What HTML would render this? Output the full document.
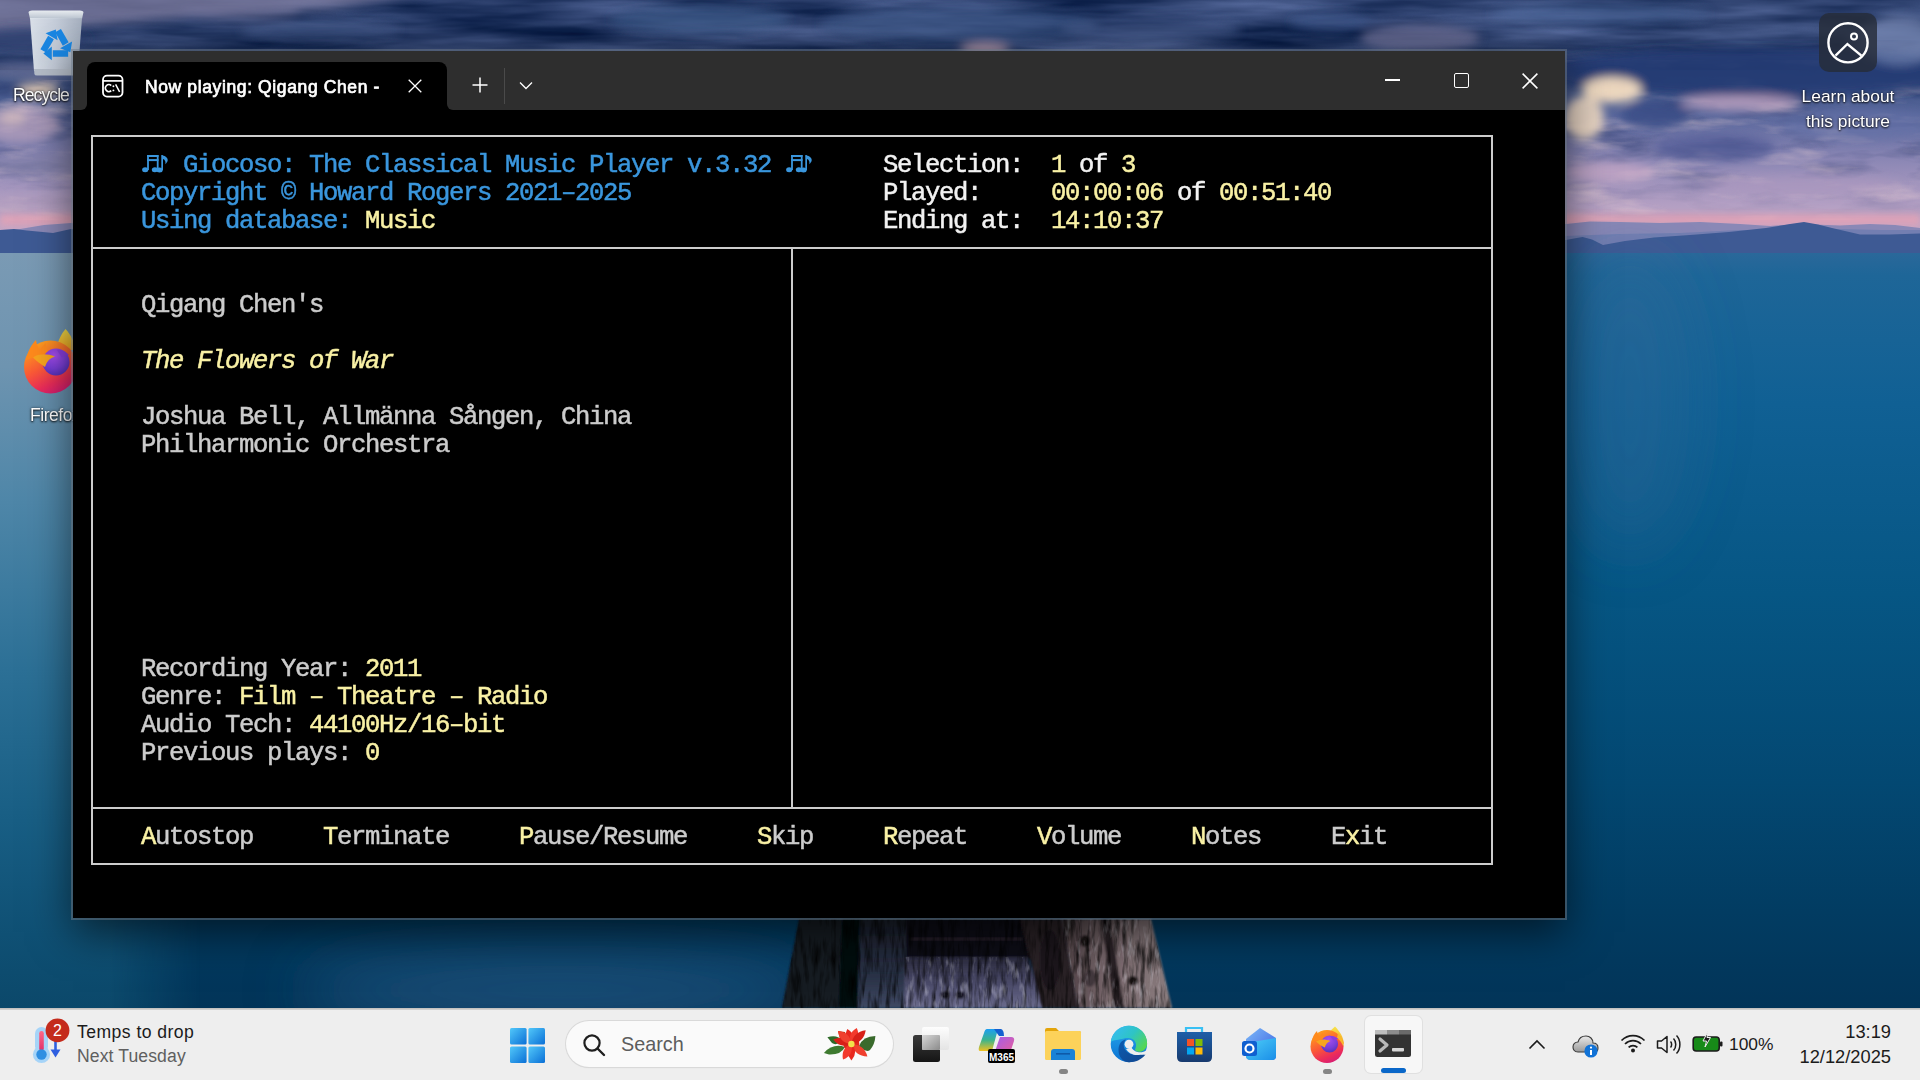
<!DOCTYPE html>
<html><head><meta charset="utf-8">
<style>
html,body{margin:0;padding:0;width:1920px;height:1080px;overflow:hidden;background:#1d4f7a;}
body{position:relative;font-family:"Liberation Sans",sans-serif;}
.a{position:absolute;}
#bg{position:absolute;left:0;top:0;width:1920px;height:1080px;}
#win{position:absolute;left:73px;top:51px;width:1492px;height:867px;background:#000;box-shadow:0 0 0 2px rgba(110,122,135,0.5),0 14px 40px rgba(0,0,0,0.6);}
.g{background:#2e2e2e;position:absolute;}
.row{position:absolute;left:85px;height:28px;line-height:28px;font-family:"Liberation Mono",monospace;font-size:25.6px;letter-spacing:-1.36px;margin-top:2px;white-space:pre;color:#cccccc;-webkit-text-stroke:0.5px currentColor;}
.b{color:#3a96dd}.y{color:#f9f1a5}.w{color:#f2f2f2}
.ln{position:absolute;background:#cccccc;}
#tb{position:absolute;left:0;top:1008px;width:1920px;height:72px;background:#eeeeee;border-top:1px solid #c4c2c0;box-sizing:border-box;}
</style></head><body>
<div id="bg"><svg class="a" style="left:0;top:0" width="1920" height="1080" viewBox="0 0 1920 1080">
<defs>
<linearGradient id="sky" x1="0" y1="0" x2="0" y2="1">
<stop offset="0" stop-color="#2a4472"/>
<stop offset="0.25" stop-color="#2b4676"/>
<stop offset="0.45" stop-color="#59679c"/>
<stop offset="0.62" stop-color="#8a86b4"/>
<stop offset="0.8" stop-color="#b4a0c4"/>
<stop offset="0.92" stop-color="#c6a8c6"/>
<stop offset="1" stop-color="#d2a8c0"/>
</linearGradient>
<linearGradient id="sea" x1="0" y1="0" x2="0" y2="1">
<stop offset="0" stop-color="#2a689a"/>
<stop offset="0.03" stop-color="#1e6698"/>
<stop offset="0.2" stop-color="#106094"/>
<stop offset="0.45" stop-color="#065684"/>
<stop offset="0.7" stop-color="#034872"/>
<stop offset="0.87" stop-color="#023c62"/>
<stop offset="1" stop-color="#023458"/>
</linearGradient>
<linearGradient id="fogL" x1="0" y1="0" x2="0" y2="1">
<stop offset="0" stop-color="#7a9ab4"/>
<stop offset="0.15" stop-color="#6e94b0"/>
<stop offset="0.33" stop-color="#4e86a8"/>
<stop offset="0.55" stop-color="#2c7096"/>
<stop offset="0.75" stop-color="#185e84"/>
<stop offset="0.9" stop-color="#0f5074"/>
<stop offset="1" stop-color="#0b486a"/>
</linearGradient>
<linearGradient id="fogFade" x1="0" y1="0" x2="1" y2="0">
<stop offset="0" stop-color="#fff" stop-opacity="1"/>
<stop offset="0.55" stop-color="#fff" stop-opacity="1"/>
<stop offset="1" stop-color="#fff" stop-opacity="0"/>
</linearGradient>
<linearGradient id="vfade" x1="0" y1="0" x2="0" y2="1"><stop offset="0" stop-color="#fff"/><stop offset="0.55" stop-color="#fff"/><stop offset="1" stop-color="#000"/></linearGradient>
<mask id="skyMaskR" maskUnits="userSpaceOnUse" x="0" y="0" width="1920" height="260"><rect x="0" y="40" width="1920" height="185" fill="url(#vfade)"/></mask>
<mask id="fogMask"><rect x="0" y="0" width="200" height="1080" fill="url(#fogFade)"/></mask>
<filter id="bl3" x="-50%" y="-50%" width="200%" height="200%"><feGaussianBlur stdDeviation="3"/></filter>
<filter id="bl5" x="-50%" y="-50%" width="200%" height="200%"><feGaussianBlur stdDeviation="5"/></filter>
<filter id="bl12" x="-50%" y="-50%" width="200%" height="200%"><feGaussianBlur stdDeviation="12"/></filter>
<filter id="bl30" x="-50%" y="-50%" width="200%" height="200%"><feGaussianBlur stdDeviation="30"/></filter>
<filter id="cloudTex" x="0" y="0" width="100%" height="100%" color-interpolation-filters="sRGB">
<feTurbulence type="fractalNoise" baseFrequency="0.005 0.045" numOctaves="4" seed="21"/>
<feColorMatrix type="matrix" values="0.55 0 0 0 -0.1  0.55 0 0 0 -0.03  0.62 0 0 0 0.11  0 0 0 0 1"/>
</filter>
<filter id="darkTex" x="0" y="0" width="100%" height="100%" color-interpolation-filters="sRGB">
<feTurbulence type="fractalNoise" baseFrequency="0.012 0.05" numOctaves="4" seed="8"/>
<feColorMatrix type="matrix" values="0 0 0 0 0.16  0 0 0 0 0.22  0 0 0 0 0.42  2.6 0 0 0 -1.25"/>
</filter>
<filter id="lightTex" x="0" y="0" width="100%" height="100%" color-interpolation-filters="sRGB">
<feTurbulence type="fractalNoise" baseFrequency="0.014 0.06" numOctaves="4" seed="3"/>
<feColorMatrix type="matrix" values="0 0 0 0 0.95  0 0 0 0 0.84  0 0 0 0 0.84  2.4 0 0 0 -1.25"/>
</filter>
</defs>
<rect x="0" y="0" width="1920" height="256" fill="url(#sky)"/>
<!-- top band clouds -->
<rect x="0" y="0" width="1920" height="70" filter="url(#cloudTex)" opacity="0.8"/>
<g filter="url(#bl5)">
<path d="M-20 -10 L440 -10 L330 8 L180 18 L60 28 L-20 34 Z" fill="#8480a2" opacity="0.7"/>
<ellipse cx="25" cy="36" rx="45" ry="12" fill="#6c6e98" opacity="0.55"/>
<ellipse cx="240" cy="12" rx="60" ry="8" fill="#7c7ca2" opacity="0.5"/>
<ellipse cx="320" cy="30" rx="80" ry="9" fill="#4a5e8e" opacity="0.6"/>
<ellipse cx="700" cy="20" rx="90" ry="14" fill="#3e5a8a" opacity="0.6"/>
<ellipse cx="960" cy="25" rx="140" ry="18" fill="#465f90" opacity="0.55"/>
<ellipse cx="985" cy="49" rx="25" ry="6" fill="#b89aa8" opacity="0.85"/>
<ellipse cx="1150" cy="30" rx="90" ry="14" fill="#4e6494" opacity="0.5"/>
<ellipse cx="1420" cy="38" rx="60" ry="14" fill="#76789e" opacity="0.7"/>
<ellipse cx="1330" cy="22" rx="40" ry="10" fill="#3a5688" opacity="0.6"/>
<ellipse cx="1600" cy="14" rx="110" ry="10" fill="#4e6ca0" opacity="0.5"/>
<ellipse cx="1890" cy="45" rx="45" ry="22" fill="#7080ae" opacity="0.55"/>
</g>
<!-- right strip clouds -->
<rect x="1566" y="40" width="354" height="185" filter="url(#darkTex)" opacity="0.55" mask="url(#skyMaskR)"/>
<rect x="1566" y="60" width="354" height="160" filter="url(#lightTex)" opacity="0.45"/>
<g filter="url(#bl5)">
<ellipse cx="1760" cy="72" rx="230" ry="24" fill="#223c74" opacity="0.9"/>
<ellipse cx="1900" cy="40" rx="40" ry="25" fill="#7a8ab6" opacity="0.6"/>
<ellipse cx="1612" cy="90" rx="30" ry="13" fill="#f6dec2" opacity="0.95"/>
<ellipse cx="1584" cy="118" rx="20" ry="22" fill="#f2dcc4" opacity="0.9"/>
<ellipse cx="1655" cy="115" rx="34" ry="14" fill="#3a4c86" opacity="0.85"/>
<ellipse cx="1740" cy="103" rx="60" ry="8" fill="#c8a8c4" opacity="0.75"/>
<ellipse cx="1715" cy="148" rx="60" ry="14" fill="#4e5a96" opacity="0.7"/>
<ellipse cx="1860" cy="125" rx="80" ry="16" fill="#6470a6" opacity="0.6"/>
<ellipse cx="1610" cy="172" rx="45" ry="10" fill="#caaac8" opacity="0.7"/>
<ellipse cx="1800" cy="185" rx="100" ry="10" fill="#b09ac0" opacity="0.5"/>
</g>
<!-- left strip clouds -->
<rect x="0" y="40" width="75" height="185" filter="url(#darkTex)" opacity="0.6" mask="url(#skyMaskR)"/>
<rect x="0" y="80" width="75" height="140" filter="url(#lightTex)" opacity="0.6"/>
<g filter="url(#bl5)">
<ellipse cx="30" cy="40" rx="60" ry="12" fill="#2c3e6e" opacity="0.8"/>
<ellipse cx="30" cy="72" rx="50" ry="8" fill="#7a7c9e" opacity="0.6"/>
<ellipse cx="38" cy="90" rx="22" ry="6" fill="#f2d6b8" opacity="0.9"/>
<ellipse cx="20" cy="125" rx="40" ry="18" fill="#b8a2be" opacity="0.75"/>
<ellipse cx="12" cy="118" rx="14" ry="6" fill="#e0c4c0" opacity="0.7"/>
<ellipse cx="40" cy="165" rx="50" ry="12" fill="#7e7ea4" opacity="0.55"/>
<ellipse cx="30" cy="205" rx="50" ry="10" fill="#b09cbc" opacity="0.6"/>
</g>
<!-- pink horizon haze -->
<rect x="0" y="214" width="1920" height="12" fill="#e6a2b4" opacity="0.75" filter="url(#bl3)"/>
<!-- mountains -->
<path d="M0 232 L20 229 L44 225 L71 223 L90 226 L140 230 L400 232 L1566 224 L1590 221.5 L1620 222 L1660 223 L1700 222 L1740 224 L1770 226 L1800 224 L1840 225.5 L1870 224 L1895 225 L1920 228 L1920 256 L0 256 Z" fill="#8a88b6"/>
<path d="M0 236 L200 238 L1566 236 L1620 234 L1680 233 L1740 230 L1790 231 L1840 229 L1880 230 L1920 230 L1920 256 L0 256 Z" fill="#6e7cb0" opacity="0.85"/>
<path d="M0 230 L14 229 L27 230.5 L53 233 L71 229 L90 231 L140 236 L400 238 L1566 240 L1574 238.5 L1582.5 237 L1592 239.5 L1603 245 L1625 241 L1654 237.5 L1690 235 L1729 232 L1766 228 L1790 224 L1804 222 L1818 224.5 L1832 228 L1860 234.5 L1890 234.5 L1920 233.5 L1920 256 L0 256 Z" fill="#3e5a94"/>
<rect x="0" y="253" width="1920" height="757" fill="url(#sea)"/>
<!-- left fog strip -->
<rect x="0" y="253" width="200" height="757" fill="url(#fogL)" mask="url(#fogMask)"/>
<g filter="url(#bl30)">
<ellipse cx="1630" cy="400" rx="60" ry="150" fill="#3a6a98" opacity="0.3"/>
<ellipse cx="560" cy="990" rx="260" ry="35" fill="#2d5f8e" opacity="0.6"/>
</g>
<!-- pier -->
<defs>
<linearGradient id="p2" x1="0" y1="0" x2="0" y2="1"><stop offset="0" stop-color="#1c202c"/><stop offset="0.6" stop-color="#283044"/><stop offset="1" stop-color="#3e4862"/></linearGradient>
<linearGradient id="pl" x1="0" y1="0" x2="0" y2="1"><stop offset="0" stop-color="#2c2c40"/><stop offset="0.5" stop-color="#4a4a68"/><stop offset="1" stop-color="#6a6a8c"/></linearGradient>
<linearGradient id="pb" x1="0" y1="0" x2="1" y2="0"><stop offset="0" stop-color="#4e4044"/><stop offset="0.4" stop-color="#76666a"/><stop offset="1" stop-color="#8a7c7e"/></linearGradient>
<filter id="pbl" x="-10%" y="-10%" width="120%" height="120%"><feGaussianBlur stdDeviation="0.8"/></filter>
<filter id="grainD" x="0" y="0" width="100%" height="100%">
<feTurbulence type="fractalNoise" baseFrequency="0.22 0.035" numOctaves="3" seed="11"/>
<feColorMatrix type="matrix" values="0 0 0 0 0  0 0 0 0 0  0 0 0 0 0  1.7 0 0 0 -0.72"/>
</filter>
<filter id="grainL" x="0" y="0" width="100%" height="100%">
<feTurbulence type="fractalNoise" baseFrequency="0.18 0.05" numOctaves="3" seed="5"/>
<feColorMatrix type="matrix" values="0 0 0 0 0.9  0 0 0 0 0.9  0 0 0 0 1  2.0 0 0 0 -1.1"/>
</filter>
<clipPath id="pierclip"><path d="M799 919 L1151 919 L1172 1008 L782 1008 Z"/></clipPath><clipPath id="plankclip"><path d="M905 957 L1028 957 L1044 1008 L904 1008 Z"/><path d="M1062 919 L1151 919 L1172 1008 L1078 1008 Z"/></clipPath>
</defs>
<g filter="url(#pbl)">
<path d="M799 919 L842 919 L839 1008 L782 1008 Z" fill="#161a24"/>
<path d="M842 919 L860 919 L858 1008 L839 1008 Z" fill="#06080c"/>
<path d="M860 919 L910 919 L905 1008 L858 1008 Z" fill="url(#p2)"/>
<rect x="906" y="919" width="124" height="40" fill="#100c14"/>
<rect x="910" y="938" width="112" height="2" fill="#2a2632"/>
<path d="M905 957 L1028 957 L1044 1008 L904 1008 Z" fill="url(#pl)"/>
<path d="M1020 919 L1062 919 L1078 1008 L1042 1008 Z" fill="#2a2228"/>
<path d="M1062 919 L1151 919 L1172 1008 L1078 1008 Z" fill="url(#pb)"/>
<path d="M1101 919 L1110 919 L1124 1008 L1114 1008 Z" fill="#2a2026"/>
<ellipse cx="1085" cy="941" rx="5" ry="6" fill="#1a1418"/>
<ellipse cx="1133" cy="981" rx="5" ry="5" fill="#1a1418"/>
<ellipse cx="1090" cy="978" rx="6" ry="9" fill="#3a3036" opacity="0.8"/>
<ellipse cx="1050" cy="960" rx="10" ry="30" fill="#151015" opacity="0.7"/>
<ellipse cx="945" cy="995" rx="5" ry="4" fill="#181420"/>
<ellipse cx="960" cy="995" rx="5" ry="4" fill="#181420"/>
</g>
<g clip-path="url(#pierclip)">
<rect x="780" y="919" width="400" height="90" filter="url(#grainD)"/>
</g>
<g clip-path="url(#plankclip)"><rect x="850" y="919" width="330" height="90" filter="url(#grainL)" opacity="0.55"/></g>

</svg></div>


<!-- desktop icons -->
<svg class="a" style="left:26px;top:9px" width="60" height="68" viewBox="0 0 60 68">
  <defs><linearGradient id="rb" x1="0" y1="0" x2="1" y2="0"><stop offset="0" stop-color="#dfe5ec"/><stop offset="0.5" stop-color="#c9d1dc"/><stop offset="1" stop-color="#a9b3c1"/></linearGradient>
  <linearGradient id="rbt" x1="0" y1="0" x2="0" y2="1"><stop offset="0" stop-color="#e8ecf0"/><stop offset="1" stop-color="#b8c2ce"/></linearGradient></defs>
  <path d="M2.5 3 Q3 1.5 6 1.5 H54 Q57 1.5 57.5 3 L56 10 H4 Z" fill="url(#rbt)"/>
  <path d="M4 9 H56 L52 62 H8 Z" fill="url(#rb)" opacity="0.95"/>
  <path d="M8 60 H52 L51.6 65 Q51.4 66.5 49 66.5 H11 Q8.6 66.5 8.4 65 Z" fill="#b4bcc8"/>
  <g transform="translate(30.5,36) scale(1.28)" fill="#1a86e2">
    <g id="rseg"><path d="M1.2 -11.2 L7.2 -0.8" stroke="#1a86e2" stroke-width="5.2"/><path d="M10.8 5.6 L12.2 -2.8 L2.8 2.6 Z"/></g>
    <use href="#rseg" transform="rotate(120)"/>
    <use href="#rseg" transform="rotate(240)"/>
  </g>
</svg>
<div class="a" style="left:13px;top:85px;font-size:17.6px;letter-spacing:-0.95px;color:#fff;white-space:pre;text-shadow:0 1px 2px rgba(0,0,0,0.9),0 0 3px rgba(0,0,0,0.6);">Recycle</div>
<svg class="a" style="left:0px;top:320px" width="73" height="80" viewBox="0 0 73 80">
  <defs><linearGradient id="dfb" x1="0.2" y1="0.1" x2="0.6" y2="1"><stop offset="0" stop-color="#ff9a1e"/><stop offset="0.45" stop-color="#fb5a36"/><stop offset="0.8" stop-color="#ec2c5a"/><stop offset="1" stop-color="#d81f72"/></linearGradient>
  <linearGradient id="dfy" x1="0" y1="0" x2="0" y2="1"><stop offset="0" stop-color="#f4e04a"/><stop offset="1" stop-color="#f6a820"/></linearGradient>
  <radialGradient id="dfg" cx="0.45" cy="0.25" r="0.8"><stop offset="0" stop-color="#a84ef0"/><stop offset="0.6" stop-color="#7a3ed8"/><stop offset="1" stop-color="#5030b8"/></radialGradient></defs>
  <path d="M56 30 C58 20 62 13 65.5 9 C70 14 75 22 76 30 Z" fill="url(#dfy)"/>
  <circle cx="50.5" cy="47" r="26.5" fill="url(#dfb)"/>
  <path d="M26 40 C28 30 32 24 36 20 C37 25 38 28 40 30 C42 27 44 25 45.5 23 C46 27 47 30 49 32 Z" fill="#ff8a1c"/>
  <circle cx="56" cy="42" r="13.5" fill="url(#dfg)"/>
  <path d="M57 30 C62 29 66 32 69 35 C66 35 63 36 62 38 Z" fill="#8a3ee0"/>
  <path d="M33 37.5 C38 34 46 33 55 36.5 C50 38 47 41 45 47 C41 44 36 41 33 37.5 Z" fill="#f7a51e"/>
</svg>
<div class="a" style="left:30px;top:405px;font-size:17.6px;letter-spacing:-0.5px;color:#fff;white-space:pre;text-shadow:0 1px 2px rgba(0,0,0,0.9),0 0 3px rgba(0,0,0,0.6);">Firefox</div>
<div class="a" style="left:1819px;top:13px;width:58px;height:59px;border-radius:10px;background:rgba(38,44,56,0.82);"></div>
<svg class="a" style="left:1826px;top:21px" width="44" height="44" viewBox="0 0 44 44">
  <circle cx="22" cy="21.8" r="19.6" fill="none" stroke="#fff" stroke-width="2.4"/>
  <circle cx="28" cy="15.6" r="3" fill="none" stroke="#fff" stroke-width="2"/>
  <path d="M9.5 34.7 L21.4 23 L35.4 34.7" fill="none" stroke="#fff" stroke-width="2.4"/>
</svg>
<div class="a" style="left:1790px;top:84px;width:116px;text-align:center;font-size:17.4px;line-height:25px;color:#fff;white-space:pre;text-shadow:0 1px 2px rgba(0,0,0,0.9),0 0 3px rgba(0,0,0,0.6);">Learn about
this picture</div>

<div id="win">
  <!-- title bar pieces (window-relative coords) -->
  <div class="g" style="left:0;top:0;width:1492px;height:11px;"></div>
  <div class="g" style="left:0;top:11px;width:14px;height:48px;border-bottom-right-radius:6px;"></div>
  <div class="g" style="left:14px;top:11px;width:360px;height:12px;"></div>
  <div class="g" style="left:374px;top:11px;width:1118px;height:48px;border-bottom-left-radius:6px;"></div>
  <div class="a" style="left:14px;top:11px;width:360px;height:48px;background:#000;border-radius:8px 8px 0 0;"></div>
<!-- tab icon -->
  <svg class="a" style="left:28px;top:23px" width="24" height="24" viewBox="0 0 24 24">
    <rect x="2" y="1.6" width="19.5" height="21" rx="4" ry="4" fill="none" stroke="#fff" stroke-width="1.8"/>
    <line x1="2" y1="6.9" x2="21.5" y2="6.9" stroke="#fff" stroke-width="1.7"/>
    <path d="M10.2 11.6 A3.3 3.6 0 1 0 10.2 16.6" fill="none" stroke="#fff" stroke-width="1.6"/><circle cx="12.4" cy="12.3" r="0.95" fill="#fff"/><circle cx="12.4" cy="16.4" r="0.95" fill="#fff"/><path d="M14.6 10.4 L18.6 17.8" stroke="#fff" stroke-width="1.5"/>
  </svg>
  <div class="a" style="left:72px;top:24px;height:24px;line-height:24px;font-size:17.5px;font-weight:normal;color:#fff;white-space:pre;letter-spacing:0.62px;-webkit-text-stroke:0.7px #fff;">Now playing: Qigang Chen -</div>
  <svg class="a" style="left:335px;top:28px" width="14" height="14" viewBox="0 0 14 14"><path d="M0.7 0.7 L13.3 13.3 M13.3 0.7 L0.7 13.3" stroke="#fff" stroke-width="1.3"/></svg>
  <svg class="a" style="left:399px;top:26px" width="16" height="16" viewBox="0 0 16 16"><path d="M8 0.5 V15.5 M0.5 8 H15.5" stroke="#fff" stroke-width="1.5"/></svg>
  <div class="a" style="left:431px;top:17px;width:1px;height:36px;background:#4a4a4a;"></div>
  <svg class="a" style="left:446px;top:30px" width="14" height="9" viewBox="0 0 14 9"><path d="M1 1.5 L7 7.5 L13 1.5" fill="none" stroke="#fff" stroke-width="1.3"/></svg>
  <div class="a" style="left:1312px;top:28px;width:15px;height:1.6px;background:#fff;"></div>
  <div class="a" style="left:1381px;top:22px;width:15px;height:15px;border:1.6px solid #fff;border-radius:2px;box-sizing:border-box;"></div>
  <svg class="a" style="left:1449px;top:22px" width="16" height="16" viewBox="0 0 16 16"><path d="M0.6 0.6 L15.4 15.4 M15.4 0.6 L0.6 15.4" stroke="#fff" stroke-width="1.5"/></svg>
</div>

<!-- terminal text -->
<svg class="a" style="left:136px;top:148px" width="40" height="30" viewBox="0 0 40 30" fill="#3a96dd">
<ellipse cx="9.2" cy="21.8" rx="3.1" ry="2.5"/><rect x="11.1" y="7" width="1.8" height="15"/>
<rect x="11.1" y="7" width="11.4" height="2"/><rect x="11.1" y="11.1" width="11.4" height="2"/>
<rect x="20.8" y="7" width="1.8" height="15"/><ellipse cx="18.9" cy="21.8" rx="3.1" ry="2.5"/>
<rect x="25.3" y="7.2" width="1.7" height="15"/><ellipse cx="23.6" cy="22" rx="3.1" ry="2.5"/>
<path d="M25.3 7.2 C29 7.5 32.2 9.5 31.7 12.5 C31.3 14.2 30.3 15.2 29.3 16.3 C30 13.6 28.7 11.2 26.9 10.9 Z"/>
</svg>
<svg class="a" style="left:780px;top:148px" width="40" height="30" viewBox="0 0 40 30" fill="#3a96dd">
<ellipse cx="9.2" cy="21.8" rx="3.1" ry="2.5"/><rect x="11.1" y="7" width="1.8" height="15"/>
<rect x="11.1" y="7" width="11.4" height="2"/><rect x="11.1" y="11.1" width="11.4" height="2"/>
<rect x="20.8" y="7" width="1.8" height="15"/><ellipse cx="18.9" cy="21.8" rx="3.1" ry="2.5"/>
<rect x="25.3" y="7.2" width="1.7" height="15"/><ellipse cx="23.6" cy="22" rx="3.1" ry="2.5"/>
<path d="M25.3 7.2 C29 7.5 32.2 9.5 31.7 12.5 C31.3 14.2 30.3 15.2 29.3 16.3 C30 13.6 28.7 11.2 26.9 10.9 Z"/>
</svg>

<div class="row b" style="top:150px;"><span>       Giocoso: The Classical Music Player v.3.32</span></div>
<div class="row" style="top:150px;"><span>                                                         </span><span class="w">Selection:  </span><span class="y">1</span><span class="w"> of </span><span class="y">3</span></div>
<div class="row b" style="top:178px;">    Copyright © Howard Rogers 2021–2025</div>
<div class="row" style="top:178px;"><span>                                                         </span><span class="w">Played:     </span><span class="y">00:00:06</span><span class="w"> of </span><span class="y">00:51:40</span></div>
<div class="row b" style="top:206px;">    Using database: <span class="y">Music</span></div>
<div class="row" style="top:206px;"><span>                                                         </span><span class="w">Ending at:  </span><span class="y">14:10:37</span></div>

<div class="row" style="top:290px;">    Qigang Chen's</div>
<div class="row y" style="top:346px;font-style:italic;">    The Flowers of War</div>
<div class="row" style="top:402px;">    Joshua Bell, Allmänna Sången, China</div>
<div class="row" style="top:430px;">    Philharmonic Orchestra</div>
<div class="row" style="top:654px;">    Recording Year: <span class="y">2011</span></div>
<div class="row" style="top:682px;">    Genre: <span class="y">Film – Theatre – Radio</span></div>
<div class="row" style="top:710px;">    Audio Tech: <span class="y">44100Hz/16–bit</span></div>
<div class="row" style="top:738px;">    Previous plays: <span class="y">0</span></div>
<div class="row" style="top:822px;">    <span class="y">A</span>utostop     <span class="y">T</span>erminate     <span class="y">P</span>ause/Resume     <span class="y">S</span>kip     <span class="y">R</span>epeat     <span class="y">V</span>olume     <span class="y">N</span>otes     E<span class="y">x</span>it</div>

<!-- box lines -->
<div class="ln" style="left:91px;top:135px;width:1402px;height:2px;"></div>
<div class="ln" style="left:91px;top:247px;width:1402px;height:2px;"></div>
<div class="ln" style="left:91px;top:807px;width:1402px;height:2px;"></div>
<div class="ln" style="left:91px;top:863px;width:1402px;height:2px;"></div>
<div class="ln" style="left:91px;top:135px;width:2px;height:730px;"></div>
<div class="ln" style="left:1491px;top:135px;width:2px;height:730px;"></div>
<div class="ln" style="left:791px;top:247px;width:2px;height:562px;"></div>

<div id="tb">
  <div class="a" style="left:0;top:0;width:1920px;height:1px;background:#d2d0ce;"></div>
  <!-- weather -->
  <svg class="a" style="left:30px;top:7px" width="44" height="56" viewBox="0 0 44 56">
    <defs><linearGradient id="thg" x1="0" y1="0" x2="0" y2="1"><stop offset="0" stop-color="#ff6a88"/><stop offset="1" stop-color="#e0306a"/></linearGradient></defs>
    <rect x="5" y="11" width="13" height="26" rx="6.5" fill="#a6d4f8"/>
    <circle cx="11.5" cy="38.5" r="8.6" fill="#a6d4f8"/>
    <rect x="9.2" y="15" width="4.6" height="20" rx="2.3" fill="url(#thg)"/>
    <circle cx="11.5" cy="38.5" r="5.2" fill="#2f8fe2"/>
    <path d="M25.5 24 V36" stroke="#2f5fe0" stroke-width="2.6"/>
    <path d="M20.5 33.5 L25.5 41.5 L30.5 33.5 Z" fill="#2f5fe0"/>
    <circle cx="27.5" cy="14.4" r="11.9" fill="#c42b1c"/>
    <text x="27.5" y="20.2" text-anchor="middle" font-family="Liberation Sans" font-size="16" fill="#fff">2</text>
  </svg>
  <div class="a" style="left:77px;top:13px;font-size:17.6px;letter-spacing:0.45px;color:#1b1b1b;white-space:pre;">Temps to drop</div>
  <div class="a" style="left:77px;top:37px;font-size:17.6px;letter-spacing:0.1px;color:#5f5f5f;white-space:pre;">Next Tuesday</div>
  <!-- start -->
  <svg class="a" style="left:510px;top:19px" width="36" height="36" viewBox="0 0 36 36">
    <defs><linearGradient id="wg" x1="0" y1="0" x2="1" y2="1"><stop offset="0" stop-color="#52c8fa"/><stop offset="1" stop-color="#0a6fd6"/></linearGradient></defs>
    <rect x="0" y="0" width="16.6" height="16.6" rx="1.5" fill="url(#wg)"/>
    <rect x="18.4" y="0" width="16.6" height="16.6" rx="1.5" fill="url(#wg)"/>
    <rect x="0" y="18.4" width="16.6" height="16.6" rx="1.5" fill="url(#wg)"/>
    <rect x="18.4" y="18.4" width="16.6" height="16.6" rx="1.5" fill="url(#wg)"/>
  </svg>
  <!-- search -->
  <div class="a" style="left:566px;top:12px;width:327px;height:46px;border-radius:23px;background:#fafafa;box-shadow:0 0 0 1px #d9d9d9, 0 1px 1px rgba(0,0,0,0.12);"></div>
  <svg class="a" style="left:582px;top:24px" width="24" height="24" viewBox="0 0 24 24"><circle cx="10" cy="10" r="7.6" fill="none" stroke="#1f1f1f" stroke-width="2.2"/><path d="M15.5 15.5 L22 22" stroke="#1f1f1f" stroke-width="2.4" stroke-linecap="round"/></svg>
  <div class="a" style="left:621px;top:24px;font-size:19.8px;color:#5d5d5d;white-space:pre;">Search</div>
  <svg class="a" style="left:815px;top:11px" width="70" height="48" viewBox="0 0 70 48">
  <path d="M8.9 32.9 Q18 23 30 27 Q26 35 14 34.5 Z" fill="#3e7a30"/>
  <path d="M12.4 17.3 Q22 14 28 21 Q21 26 17 23 Z" fill="#2f6a28"/>
  <path d="M60.4 16 Q48 16 44 26 Q51 33 55 30 Q60 24 60.4 16 Z" fill="#3a6a2c"/>
  <path d="M23 11 L30 12 L32 19 L25 19 Z" fill="#c8300c"/>
  <circle cx="36.4" cy="24" r="8" fill="#e2261c"/>
  <path d="M36.4 24.0 Q41.6 14.5 32.4 8.9 Q27.2 18.4 36.4 24.0 Z" fill="#e8281e"/>
  <path d="M36.4 24.0 Q46.2 18.4 41.8 8.0 Q32.0 13.6 36.4 24.0 Z" fill="#f23a2c"/>
  <path d="M36.4 24.0 Q48.8 22.5 50.7 10.2 Q38.3 11.7 36.4 24.0 Z" fill="#d82018"/>
  <path d="M36.4 24.0 Q39.8 36.1 52.4 36.4 Q49.0 24.3 36.4 24.0 Z" fill="#f0402e"/>
  <path d="M36.4 24.0 Q28.9 32.2 36.4 40.4 Q43.9 32.2 36.4 24.0 Z" fill="#e8281e"/>
  <path d="M36.4 24.0 Q25.6 28.2 28.0 39.6 Q38.8 35.4 36.4 24.0 Z" fill="#f23a2c"/>
  <path d="M36.4 24.0 Q29.1 14.5 18.2 19.6 Q25.5 29.1 36.4 24.0 Z" fill="#d82018"/>
  <path d="M36.4 24.0 Q34.9 12.1 23.0 11.0 Q24.5 22.9 36.4 24.0 Z" fill="#f0402e"/>
  <circle cx="36.4" cy="24" r="3.2" fill="#f2e24a"/>
</svg>
  <!-- task view -->
  <svg class="a" style="left:912px;top:17px" width="38" height="36" viewBox="0 0 38 36">
    <defs><linearGradient id="tv1" x1="0" y1="0" x2="0" y2="1"><stop offset="0" stop-color="#fdfdfd"/><stop offset="1" stop-color="#e4e4e4"/></linearGradient>
    <linearGradient id="tv2" x1="0" y1="0" x2="0" y2="1"><stop offset="0" stop-color="#3a3a3a"/><stop offset="1" stop-color="#151515"/></linearGradient>
    <linearGradient id="tv3" x1="0" y1="0" x2="1" y2="1"><stop offset="0" stop-color="#d8d8d8"/><stop offset="1" stop-color="#8a8a8a"/></linearGradient></defs>
    <rect x="1" y="9" width="27" height="27" rx="2.5" fill="url(#tv2)"/>
    <rect x="10" y="1" width="27" height="23" rx="2" fill="url(#tv1)"/>
    <rect x="10" y="9" width="18" height="15" rx="1" fill="url(#tv3)"/>
  </svg>
  <!-- copilot m365 -->
  <svg class="a" style="left:978px;top:18px" width="38" height="36" viewBox="0 0 38 36">
    <defs><linearGradient id="cp1" x1="0" y1="0" x2="0" y2="1"><stop offset="0" stop-color="#1c9ef2"/><stop offset="0.5" stop-color="#3cb48c"/><stop offset="1" stop-color="#f0c020"/></linearGradient>
    <linearGradient id="cp2" x1="0" y1="0" x2="1" y2="1"><stop offset="0" stop-color="#a05cf0"/><stop offset="1" stop-color="#f06090"/></linearGradient></defs>
    <path d="M9 2 H20 L14 24 H2 Q0 24 1 20 L6 6 Q7 2 9 2 Z" fill="url(#cp1)"/>
    <path d="M16 2 H23 Q26 3 26 9 L21 9 Z" fill="#1460d0"/>
    <path d="M22 10 H33 Q37 10 36 14 L32 26 Q31 30 28 30 H15 Z" fill="url(#cp2)"/>
    <rect x="10" y="22" width="27" height="14" rx="2" fill="#000"/>
    <text x="23.5" y="33.6" text-anchor="middle" font-family="Liberation Sans" font-weight="bold" font-size="10" fill="#fff">M365</text>
  </svg>
  <!-- explorer -->
  <svg class="a" style="left:1044px;top:18px" width="38" height="34" viewBox="0 0 38 34">
    <path d="M1 3 Q1 1 3 1 H12 L15 4 H35 Q37 4 37 6 V10 H1 Z" fill="#e3a40a"/>
    <rect x="1" y="4" width="36" height="29" rx="1.5" fill="#fcd25a"/>
    <path d="M7 33 V25 Q7 22 10 22 H28 Q31 22 31 25 V33 Z" fill="#1a82d6"/>
    <rect x="12" y="26" width="14" height="1.6" fill="#0e5aa8"/>
  </svg>
  <div class="a" style="left:1059px;top:60px;width:9px;height:5px;border-radius:3px;background:#858585;"></div>
  <!-- edge -->
  <svg class="a" style="left:1110px;top:16px" width="38" height="38" viewBox="0 0 38 38">
    <defs>
    <linearGradient id="edA" x1="0" y1="0" x2="0" y2="1"><stop offset="0" stop-color="#2aa8ec"/><stop offset="1" stop-color="#0a72d2"/></linearGradient>
    <linearGradient id="edB" x1="0" y1="0.2" x2="1" y2="0.8"><stop offset="0" stop-color="#36bcf2"/><stop offset="0.5" stop-color="#2ec4c4"/><stop offset="1" stop-color="#5ad848"/></linearGradient>
    <linearGradient id="edC" x1="0" y1="0" x2="1" y2="1"><stop offset="0" stop-color="#0c5cb0"/><stop offset="1" stop-color="#12468e"/></linearGradient>
    </defs>
    <circle cx="18.9" cy="19" r="18.2" fill="url(#edA)"/>
    <path d="M0.8 17 C2 7 10 0.8 18.9 0.8 C29 0.8 37.1 8.5 37.1 18 C37.1 24 33 27 28.5 26.8 C26 26.6 25 25.5 25 24.5 C26 22 26.5 20 25.5 17.5 C23.5 13 18 12.5 14 13.5 C9 14.8 3 15 0.8 17 Z" fill="url(#edB)"/>
    <path d="M35.5 29.5 C31 35 25.5 37.2 19.5 37.2 C12 37.2 8.5 31 8.5 25 C8.5 18.5 12 15 16 14.5 C13.5 17 13 21 15 24.5 C17.5 28.5 23 30.5 28.5 30 C31.5 29.8 33.5 29.5 35.5 29.5 Z" fill="url(#edC)"/>
    <circle cx="19" cy="19.2" r="4.4" fill="#eeeeee"/>
    <path d="M21.5 22.5 C23.5 26 27 27.2 30 27.3 C32.5 27.3 34.5 26.5 36.2 25.5 L35.5 29.5 C33.5 29.5 31.5 29.8 28.5 30 C23 30.5 18.5 28 16 24 Z" fill="#eeeeee"/>
  </svg>
  <!-- store -->
  <svg class="a" style="left:1176px;top:17px" width="38" height="38" viewBox="0 0 38 38">
    <defs><linearGradient id="st" x1="0" y1="0" x2="0" y2="1"><stop offset="0" stop-color="#1e5fa8"/><stop offset="1" stop-color="#173a6e"/></linearGradient></defs>
    <path d="M10 8 V2 H26 V8" fill="none" stroke="#38c0f4" stroke-width="2.2"/>
    <path d="M1 6 H36 V31 Q36 36 31 36 H6 Q1 36 1 31 Z" fill="url(#st)"/>
    <rect x="11" y="13" width="7" height="7" fill="#f35325"/>
    <rect x="19.5" y="13" width="7" height="7" fill="#81bc06"/>
    <rect x="11" y="21.5" width="7" height="7" fill="#05a6f0"/>
    <rect x="19.5" y="21.5" width="7" height="7" fill="#ffba08"/>
  </svg>
  <!-- outlook -->
  <svg class="a" style="left:1242px;top:17px" width="38" height="36" viewBox="0 0 38 36">
    <defs><linearGradient id="ol1" x1="0" y1="0" x2="1" y2="1"><stop offset="0" stop-color="#7ab8f8"/><stop offset="1" stop-color="#3c5ee0"/></linearGradient>
    <linearGradient id="ol2" x1="0" y1="0" x2="1" y2="1"><stop offset="0" stop-color="#50d0f8"/><stop offset="1" stop-color="#1a8ee8"/></linearGradient></defs>
    <path d="M4 13 L18 2 L34 12 V30 Q34 34 30 34 H9 Q4 34 4 30 Z" fill="url(#ol1)"/>
    <path d="M4 17 L34 12 V30 Q34 34 30 34 H9 Q4 34 4 30 Z" fill="url(#ol2)"/>
    <rect x="0" y="15" width="15" height="15" rx="2.5" fill="#0f5fd0"/>
    <circle cx="7.5" cy="22.5" r="4" fill="none" stroke="#fff" stroke-width="2.2"/>
  </svg>
  <!-- firefox -->
  <svg class="a" style="left:1309px;top:16px" width="36" height="38" viewBox="0 0 36 38">
    <defs><linearGradient id="tfb" x1="0.2" y1="0.1" x2="0.6" y2="1"><stop offset="0" stop-color="#ff9a1e"/><stop offset="0.45" stop-color="#fb5a36"/><stop offset="0.8" stop-color="#ec2c5a"/><stop offset="1" stop-color="#d81f72"/></linearGradient>
    <linearGradient id="tfy" x1="0" y1="0" x2="0" y2="1"><stop offset="0" stop-color="#f6e44c"/><stop offset="1" stop-color="#f8a422"/></linearGradient>
    <radialGradient id="tfg" cx="0.45" cy="0.25" r="0.8"><stop offset="0" stop-color="#a84ef0"/><stop offset="0.6" stop-color="#7a3ed8"/><stop offset="1" stop-color="#5030b8"/></radialGradient></defs>
    <path d="M19 10 C21 6 24 3 26 1.5 C30.5 6 34.5 12 35 19 Z" fill="url(#tfy)"/>
    <circle cx="18" cy="21.5" r="16.5" fill="url(#tfb)"/>
    <path d="M29 8 C33 12 35 17 34.5 22 C33 18 31 15 28 13 Z" fill="#f8b82a"/>
    <path d="M2.5 17 C3.5 12 5.5 8.5 8 6 C8.5 9 9 10.5 10.5 11.5 C12 10 13 9 14 8 C14.5 10.5 15 12 16.5 13 Z" fill="#ff8a1c"/>
    <circle cx="20.5" cy="19" r="8.6" fill="url(#tfg)"/>
    <path d="M21 11 C24.5 10.5 27.5 12 29.5 14 C27.5 14 26 14.5 25 16 Z" fill="#8a3ee0"/>
    <path d="M7 16.5 C10.5 14 16 13.8 21.5 16 C18.5 17 16.8 19 15.8 22.5 C12.5 21 9.5 19 7 16.5 Z" fill="#f7a51e"/>
  </svg>
  <div class="a" style="left:1323px;top:60px;width:9px;height:5px;border-radius:3px;background:#858585;"></div>
  <!-- terminal active -->
  <div class="a" style="left:1365px;top:7px;width:57px;height:57px;border-radius:6px;background:#f7f7f7;box-shadow:0 0 0 1px #e0e0e0;"></div>
  <svg class="a" style="left:1374px;top:20px" width="38" height="28" viewBox="0 0 38 28">
    <rect x="1" y="1" width="36" height="27" rx="2.5" fill="#333"/>
    <rect x="1" y="1" width="12" height="4.5" fill="#bdbdbd"/>
    <rect x="13" y="1" width="12" height="4.5" fill="#8c8c8c"/>
    <rect x="25" y="1" width="12" height="4.5" fill="#6a6a6a"/>
    <path d="M6 10 L13 16 L6 22" fill="none" stroke="#b8b8b8" stroke-width="3.2" stroke-linecap="round" stroke-linejoin="round"/>
    <rect x="18" y="19" width="12" height="3.4" rx="0.8" fill="#d6d6d6"/>
  </svg>
  <div class="a" style="left:1381px;top:59px;width:25px;height:5px;border-radius:3px;background:#0a67c9;"></div>
  <!-- tray -->
  <svg class="a" style="left:1528px;top:30px" width="18" height="11" viewBox="0 0 18 11"><path d="M1.5 9.5 L9 2 L16.5 9.5" fill="none" stroke="#1b1b1b" stroke-width="1.6"/></svg>
  <svg class="a" style="left:1572px;top:25px" width="28" height="24" viewBox="0 0 28 24">
    <defs><linearGradient id="cl" x1="0" y1="0" x2="0" y2="1"><stop offset="0" stop-color="#eaeaea"/><stop offset="1" stop-color="#9a9a9a"/></linearGradient></defs>
    <path d="M6 18 C2 18 1 15 1 13 C1 10 3 8 6 8 C7 4 10 2 14 2 C18 2 21 5 21 9 C24 9 26 11 26 14 C26 17 24 18 22 18 Z" fill="url(#cl)" stroke="#3a3a3a" stroke-width="1.1"/>
    <circle cx="19" cy="17" r="6.6" fill="#1172d6"/>
    <rect x="18" y="16" width="2" height="5" fill="#fff"/><circle cx="19" cy="13.6" r="1.1" fill="#fff"/>
  </svg>
  <svg class="a" style="left:1620px;top:25px" width="26" height="19" viewBox="0 0 26 19">
    <path d="M1.5 6.5 C8 0 18 0 24.5 6.5" fill="none" stroke="#1b1b1b" stroke-width="1.7"/>
    <path d="M5 10 C9.5 5.5 16.5 5.5 21 10" fill="none" stroke="#1b1b1b" stroke-width="1.7"/>
    <path d="M8.6 13.4 C11 11 15 11 17.4 13.4" fill="none" stroke="#1b1b1b" stroke-width="1.7"/>
    <circle cx="13" cy="16.5" r="2" fill="#1b1b1b"/>
  </svg>
  <svg class="a" style="left:1656px;top:25px" width="26" height="21" viewBox="0 0 26 21">
    <path d="M1.5 7 H5.5 L11 2.5 V18.5 L5.5 14 H1.5 Z" fill="none" stroke="#1b1b1b" stroke-width="1.5" stroke-linejoin="round"/>
    <path d="M14.5 7.5 C16 9 16 12 14.5 13.5" fill="none" stroke="#1b1b1b" stroke-width="1.5"/>
    <path d="M17.5 4.5 C20.5 7.5 20.5 13.5 17.5 16.5" fill="none" stroke="#1b1b1b" stroke-width="1.5"/>
    <path d="M20.5 1.5 C25 6 25 15 20.5 19.5" fill="none" stroke="#1b1b1b" stroke-width="1.5"/>
  </svg>
  <svg class="a" style="left:1692px;top:22px" width="32" height="22" viewBox="0 0 32 22">
    <rect x="1.2" y="6" width="26" height="14" rx="3" fill="#178a18" stroke="#1b1b1b" stroke-width="1.6"/>
    <rect x="28" y="10.5" width="2.5" height="5" rx="1" fill="#1b1b1b"/>
    <path d="M16 0.5 L11 10 H14.5 L13 16 L18.5 6.5 H15 Z" fill="#1b1b1b" stroke="#eeeeee" stroke-width="1"/>
  </svg>
  <div class="a" style="left:1729px;top:25px;font-size:17.4px;color:#1b1b1b;white-space:pre;">100%</div>
  <div class="a" style="right:29px;top:12px;font-size:18.3px;color:#1b1b1b;white-space:pre;text-align:right;">13:19</div>
  <div class="a" style="right:29px;top:37px;font-size:18.3px;color:#1b1b1b;white-space:pre;text-align:right;">12/12/2025</div>
</div>
</body></html>
